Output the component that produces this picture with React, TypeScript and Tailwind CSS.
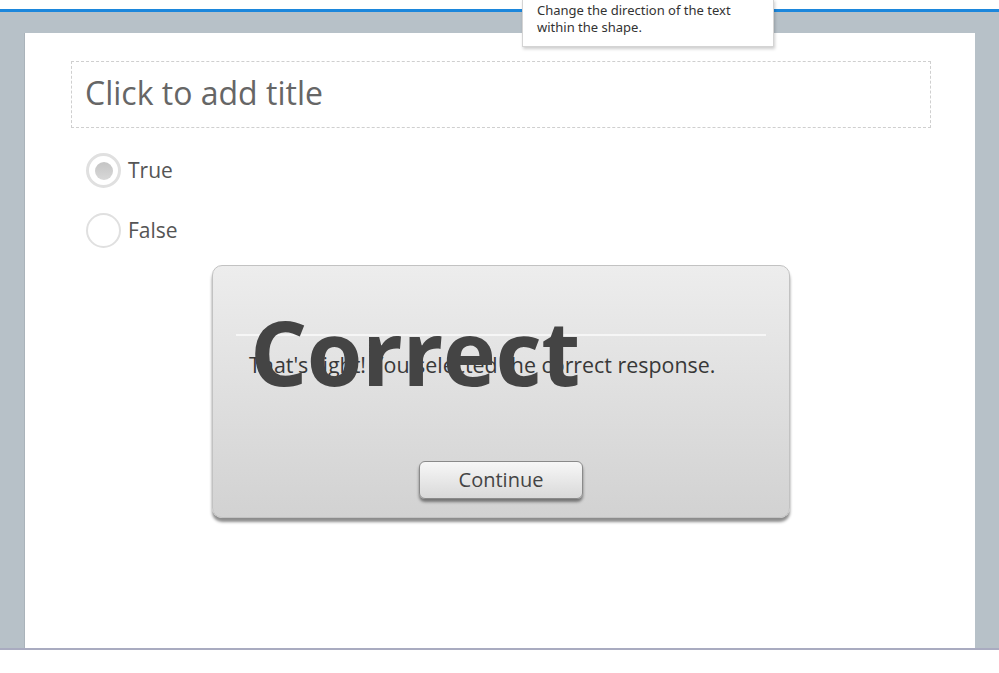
import React from "react";

const font = { fontFamily: '"Open Sans", "Noto Sans", sans-serif' };

export default function App() {
  return (
    <div className="relative w-[999px] h-[673px] bg-white overflow-hidden" style={font}>
      <div className="h-[9px] bg-white" />
      <div className="h-[3px] bg-[#1c87dc]" />
      <div className="h-[636px] bg-[#b7c1c8] px-[24px] pt-[21px] flex">
        <div className="relative flex-1 bg-white border-l border-[#aab3ba] ">
          <div className="ml-[46px] mt-[28px] w-[860px] h-[67px] border border-dashed border-[#cfcfcf] flex items-center pl-[13px] pb-[4px]">
            <span className="text-[32px] text-[#666]">Click to add title</span>
          </div>
          <div className="ml-[61px] mt-[25px] flex flex-col gap-[25px]">
            <div className="flex items-center gap-[7px]">
              <div className="w-[35px] h-[35px] rounded-full border-[3px] border-[#e0e0e0] bg-white flex items-center justify-center">
                <div className="w-[18px] h-[18px] rounded-full bg-gradient-to-b from-[#c4c4c4] to-[#d8d8d8]" />
              </div>
              <span className="text-[21px] text-[#555]">True</span>
            </div>
            <div className="flex items-center gap-[7px]">
              <div className="w-[35px] h-[35px] rounded-full border-2 border-[#e0e0e0] bg-white" />
              <span className="text-[21px] text-[#555]">False</span>
            </div>
          </div>

          <div className="absolute left-[187px] top-[232px] w-[578px] h-[253px] rounded-[10px] border border-[#c2c2c2] bg-gradient-to-b from-[#ededed] to-[#d2d2d2] shadow-[0_4px_3px_rgba(0,0,0,0.45)]">
            <div className="absolute left-[23px] right-[23px] top-[68px] h-[2px] bg-[#f6f6f6]" />
            <div className="absolute left-[36px] top-[83px] text-[21.4px] text-[#383838] whitespace-nowrap">
              That's right! You selected the correct response.
            </div>
            <div className="absolute left-[37px] top-[40px] text-[90px] font-bold text-[#444] leading-none whitespace-nowrap tracking-[-0.5px]">
              Correct
            </div>
            <div className="absolute left-[206px] top-[195px] w-[164px] h-[38px] rounded-[6px] border border-[#8a8a8a] bg-gradient-to-b from-[#f7f7f7] to-[#d9d9d9] shadow-[0_3px_3px_rgba(0,0,0,0.45)] flex items-center justify-center">
              <span className="text-[20px] text-[#444]">Continue</span>
            </div>
          </div>
        </div>
      </div>
      <div className="h-[2px] bg-[#a9abc0]" />

      <div className="absolute left-[522px] top-[-1px] w-[252px] h-[48px] bg-white border border-[#d4d4d4] shadow-[1px_2px_3px_rgba(0,0,0,0.2)] px-[14px] pt-[2px]">
        <div className="text-[13px] leading-[17px] text-[#333]" style={{ fontFamily: '"Noto Sans", "Open Sans", sans-serif' }}>
          Change the direction of the text
          <br />
          within the shape.
        </div>
      </div>
    </div>
  );
}
